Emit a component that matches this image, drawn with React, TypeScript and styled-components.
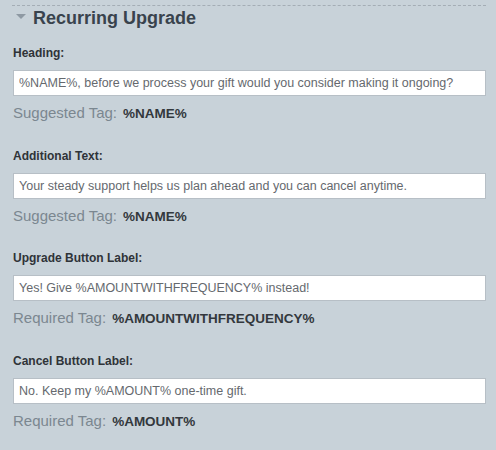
import React from "react";
import styled, { createGlobalStyle } from "styled-components";

const Global = createGlobalStyle`
  html, body { margin: 0; padding: 0; background: #c8d2d9; }
  body { font-family: "Liberation Sans", Arial, sans-serif; }
`;

const Page = styled.div`
  width: 496px;
  height: 450px;
  background: #c8d2d9;
  padding: 5px 10px 0 13px;
  box-sizing: border-box;
  overflow: hidden;
`;

const Divider = styled.div`
  border-top: 1px dashed #a4adb5;
  margin-left: -1px;
`;

const TitleRow = styled.div`
  display: flex;
  align-items: center;
  gap: 7px;
  margin-top: 2px;
  height: 20px;
  padding-left: 3px;
`;

const Caret = styled.span`
  width: 0;
  height: 0;
  border-left: 5px solid transparent;
  border-right: 5px solid transparent;
  border-top: 5px solid #8e99a3;
  margin-top: -3px;
`;

const Title = styled.h2`
  margin: 0;
  font-size: 18px;
  line-height: 20px;
  font-weight: 700;
  color: #39434d;
`;

const Fields = styled.div`
  display: flex;
  flex-direction: column;
  gap: 24.5px;
  margin-top: 17px;
`;

const Field = styled.div`
  display: flex;
  flex-direction: column;
`;

const Label = styled.label`
  font-size: 12px;
  line-height: 16px;
  font-weight: 700;
  color: #2f3338;
`;

const TextInput = styled.input`
  margin-top: 9px;
  height: 26px;
  box-sizing: border-box;
  width: 100%;
  border: 1px solid #b7bfc6;
  background: #fff;
  padding: 0 5px;
  font-family: "Liberation Sans", Arial, sans-serif;
  font-size: 12.5px;
  color: #65696e;
  outline: none;
`;

const TagLine = styled.div`
  margin-top: 8px;
  font-size: 15px;
  line-height: 18px;
  color: #7b8790;
  display: flex;
  align-items: baseline;
  gap: 6px;
`;

const Tag = styled.span`
  font-size: 13.5px;
  font-weight: 700;
  color: #33383d;
`;

const fields = [
  {
    label: "Heading:",
    value: "%NAME%, before we process your gift would you consider making it ongoing?",
    kind: "Suggested",
    tag: "%NAME%",
  },
  {
    label: "Additional Text:",
    value: "Your steady support helps us plan ahead and you can cancel anytime.",
    kind: "Suggested",
    tag: "%NAME%",
  },
  {
    label: "Upgrade Button Label:",
    value: "Yes! Give %AMOUNTWITHFREQUENCY% instead!",
    kind: "Required",
    tag: "%AMOUNTWITHFREQUENCY%",
  },
  {
    label: "Cancel Button Label:",
    value: "No. Keep my %AMOUNT% one-time gift.",
    kind: "Required",
    tag: "%AMOUNT%",
  },
];

export default function App() {
  return (
    <>
      <Global />
      <Page>
        <Divider />
        <TitleRow>
          <Caret />
          <Title>Recurring Upgrade</Title>
        </TitleRow>
        <Fields>
          {fields.map((f) => (
            <Field key={f.label}>
              <Label>{f.label}</Label>
              <TextInput defaultValue={f.value} />
              <TagLine>
                {f.kind} Tag:<Tag>{f.tag}</Tag>
              </TagLine>
            </Field>
          ))}
        </Fields>
      </Page>
    </>
  );
}
